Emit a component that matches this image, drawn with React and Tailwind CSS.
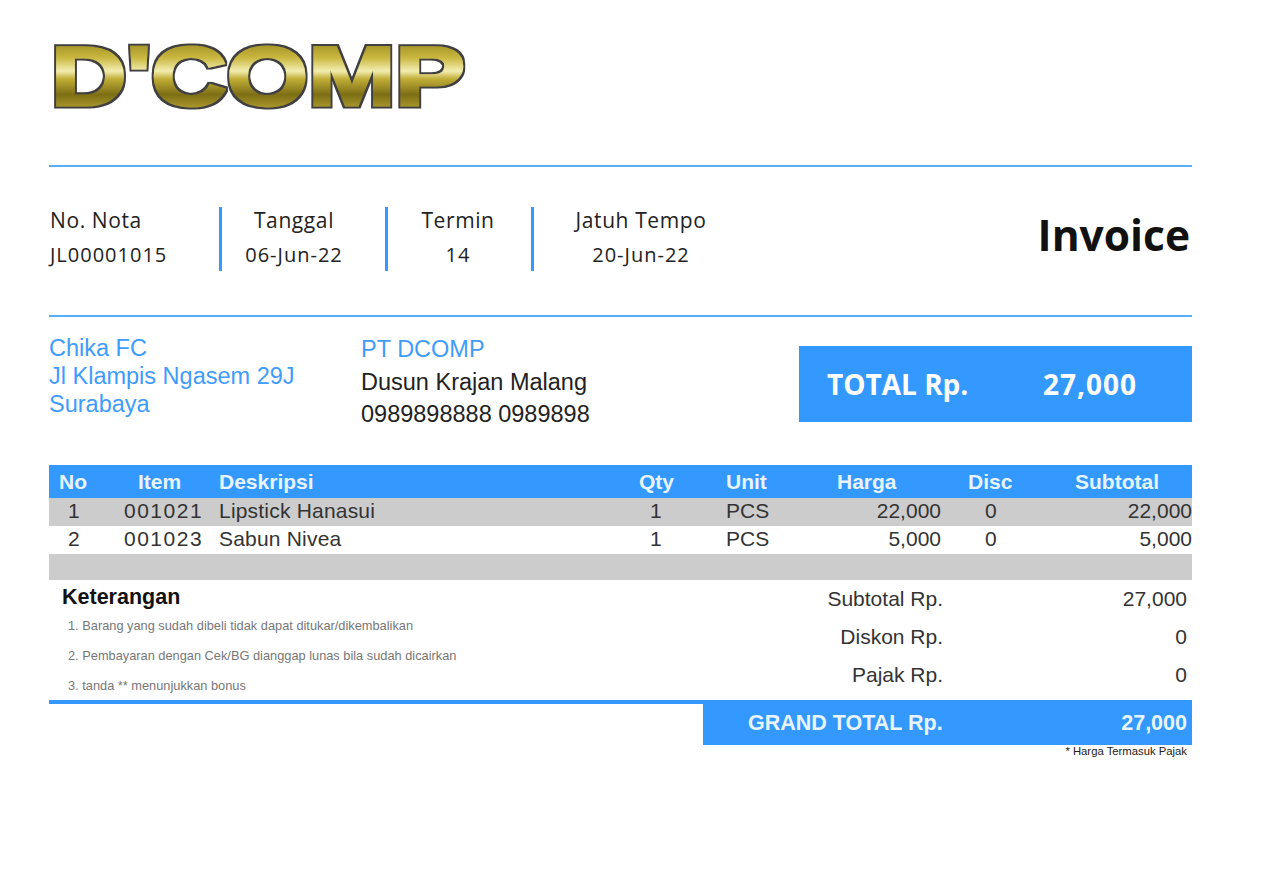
import React from "react";

const rows = [
  { no: "1", item: "001021", desc: "Lipstick Hanasui", qty: "1", unit: "PCS", harga: "22,000", disc: "0", sub: "22,000", bg: "bg-[#cccccc]" },
  { no: "2", item: "001023", desc: "Sabun Nivea", qty: "1", unit: "PCS", harga: "5,000", disc: "0", sub: "5,000", bg: "bg-white" },
];

const cols = "grid grid-cols-[50px_120px_400px_90px_90px_142px_100px_151px]";

function Logo() {
  return (
    <svg width="420" height="100" viewBox="0 0 420 100" className="block">
      <defs>
        <linearGradient id="gold" gradientUnits="userSpaceOnUse" x1="0" y1="20" x2="0" y2="82">
          <stop offset="0" stopColor="#a8962a" />
          <stop offset="0.2" stopColor="#c8b63e" />
          <stop offset="0.42" stopColor="#f3edb0" />
          <stop offset="0.55" stopColor="#c0ad36" />
          <stop offset="0.8" stopColor="#7d6e16" />
          <stop offset="1" stopColor="#a8962a" />
        </linearGradient>
        <filter id="outline" x="-5%" y="-5%" width="110%" height="110%">
          <feMorphology in="SourceAlpha" operator="dilate" radius="2" result="fat" />
          <feFlood floodColor="#3f3f3f" />
          <feComposite in2="fat" operator="in" result="edge" />
          <feMerge>
            <feMergeNode in="edge" />
            <feMergeNode in="SourceGraphic" />
          </feMerge>
        </filter>
      </defs>
      <text
        x="1"
        y="80"
        textLength="414"
        lengthAdjust="spacingAndGlyphs"
        fontFamily="'Liberation Sans', sans-serif"
        fontWeight="700"
        fontSize="84"
        fill="url(#gold)"
        stroke="url(#gold)"
        strokeWidth="3"
        filter="url(#outline)"
      >
        D'COMP
      </text>
    </svg>
  );
}

function Meta({ label, value, className }) {
  return (
    <div className={`flex h-16 shrink-0 flex-col items-center text-[#222] ${className}`}>
      <div className="-mt-px text-[21px] leading-7 tracking-[0.6px]">{label}</div>
      <div className="mt-[7px] text-[20px] leading-7 tracking-[1px]">{value}</div>
    </div>
  );
}

export default function App() {
  return (
    <div className="min-h-[873px] bg-white pl-[49px] pr-[88px] pt-[25px] font-['Open_Sans',sans-serif] text-[#222]">
      <div className="h-[140px] pl-[1px]">
        <Logo />
      </div>
      <div className="h-[2px] bg-[#5aaef5]" />

      <div className="mt-[40px] flex h-16 items-start">
        <Meta label="No. Nota" value="JL00001015" className="w-[170px] !items-start pl-px" />
        <div className="h-16 w-[3px] shrink-0 bg-[#3399ff]" />
        <Meta label="Tanggal" value="06-Jun-22" className="w-[144px]" />
        <div className="ml-[19px] h-16 w-[3px] shrink-0 bg-[#3399ff]" />
        <Meta label="Termin" value="14" className="w-[140px]" />
        <div className="ml-[3px] h-16 w-[3px] shrink-0 bg-[#3399ff]" />
        <Meta label="Jatuh Tempo" value="20-Jun-22" className="w-[214px]" />
        <div className="ml-auto pr-[2px] text-[42.5px] font-bold leading-[56px] text-[#111]">Invoice</div>
      </div>

      <div className="mt-[44px] h-[2px] bg-[#5aaef5]" />

      <div className="mt-[16px] flex h-[132px] items-start font-['Liberation_Sans',sans-serif] text-[23.5px] leading-[28px]">
        <div className="w-[312px] pt-px text-[#3f9cfb]">
          <div>Chika FC</div>
          <div>Jl Klampis Ngasem 29J</div>
          <div>Surabaya</div>
        </div>
        <div className="w-[438px] leading-[32px]">
          <div className="text-[#3f9cfb]">PT DCOMP</div>
          <div className="mt-px text-[#222]">Dusun Krajan Malang</div>
          <div className="text-[#222]">0989898888 0989898</div>
        </div>
        <div className="mt-[13px] flex h-[76px] flex-1 items-center bg-[#3399ff] pl-[28px] font-['Open_Sans',sans-serif] text-[28px] font-bold text-white">
          <div className="w-[216px]">TOTAL Rp.</div>
          <div className="tracking-[1px]">27,000</div>
        </div>
      </div>

      <div className="font-['Liberation_Sans',sans-serif]">
        <div className={`${cols} h-[33px] items-center bg-[#3399ff] text-[21px] font-bold text-[#e8f4ff]`}>
          <div className="pl-[10px]">No</div>
          <div className="pl-[39px]">Item</div>
          <div>Deskripsi</div>
          <div className="pl-[20px]">Qty</div>
          <div className="pl-[17px]">Unit</div>
          <div className="pl-[38px]">Harga</div>
          <div className="pl-[27px]">Disc</div>
          <div className="pl-[34px]">Subtotal</div>
        </div>
        {rows.map((r) => (
          <div key={r.no} className={`${cols} h-[28px] items-center pb-[2px] text-[21px] leading-[24px] text-[#333] ${r.bg}`}>
            <div className="pl-[19px]">{r.no}</div>
            <div className="pl-[25px] tracking-[1.5px]">{r.item}</div>
            <div className="tracking-[0.2px]">{r.desc}</div>
            <div className="pl-[31px]">{r.qty}</div>
            <div className="pl-[17px]">{r.unit}</div>
            <div className="text-right">{r.harga}</div>
            <div className="pl-[44px]">{r.disc}</div>
            <div className="text-right">{r.sub}</div>
          </div>
        ))}
        <div className="h-[26px] bg-[#cccccc]" />

        <div className="flex h-[120px]">
          <div className="w-[654px] pl-[13px]">
            <div className="mt-[3px] text-[21.5px] font-bold leading-[28px] text-[#111]">Keterangan</div>
            <div className="pl-[6px] text-[12.8px] text-[#777]">
              <div className="mt-[7px] leading-[16px]">1. Barang yang sudah dibeli tidak dapat ditukar/dikembalikan</div>
              <div className="mt-[14px] leading-[16px]">2. Pembayaran dengan Cek/BG dianggap lunas bila sudah dicairkan</div>
              <div className="mt-[14px] leading-[16px]">3. tanda ** menunjukkan bonus</div>
            </div>
          </div>
          <div className="flex-1 text-[21px] leading-[38px] text-[#333]">
            <div className="flex justify-between pr-[5px]"><span className="w-[240px] text-right">Subtotal Rp.</span><span>27,000</span></div>
            <div className="flex justify-between pr-[5px]"><span className="w-[240px] text-right">Diskon Rp.</span><span>0</span></div>
            <div className="flex justify-between pr-[5px]"><span className="w-[240px] text-right">Pajak Rp.</span><span>0</span></div>
          </div>
        </div>

        <div className="h-[4px] bg-[#3399ff]" />
        <div className="ml-[654px] flex h-[41px] items-center justify-between bg-[#3399ff] pb-[2px] pl-[45px] pr-[5px] text-[21.5px] font-bold text-[#e8f4ff]">
          <span>GRAND TOTAL Rp.</span>
          <span>27,000</span>
        </div>
        <div className="pr-[5px] text-right text-[11.3px] leading-[12px] text-[#222]">* Harga Termasuk Pajak</div>
      </div>
    </div>
  );
}
